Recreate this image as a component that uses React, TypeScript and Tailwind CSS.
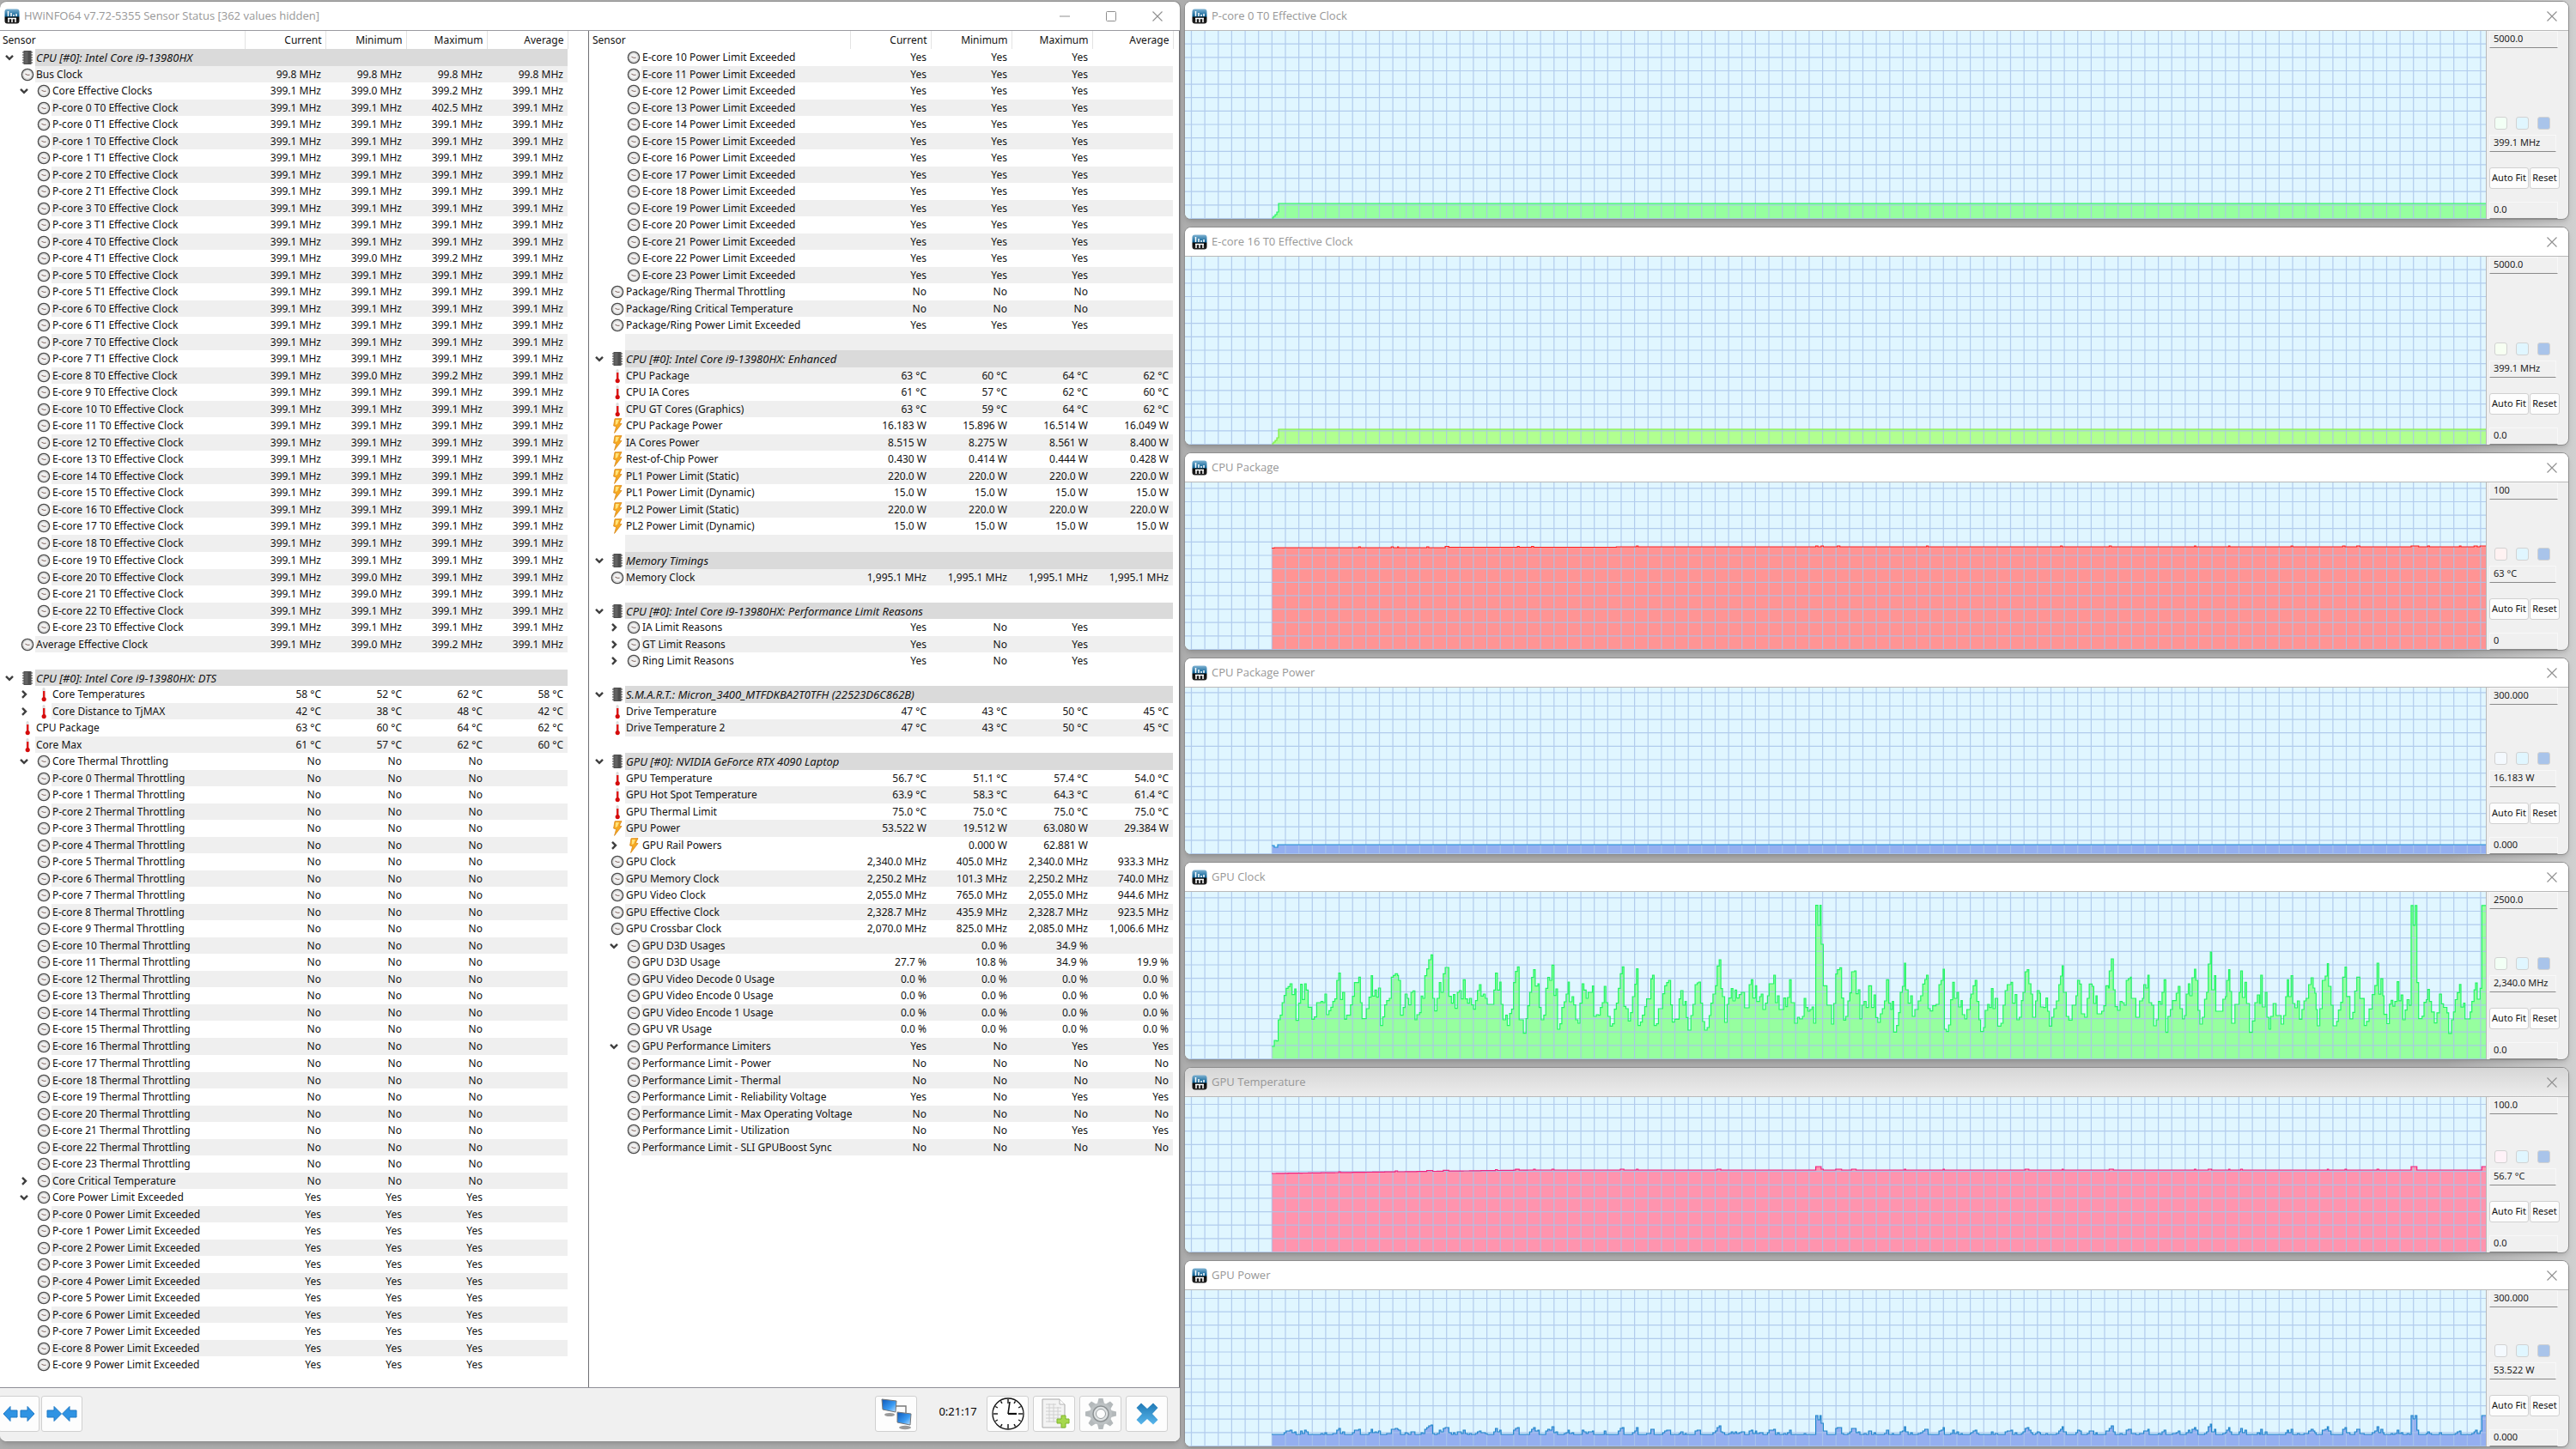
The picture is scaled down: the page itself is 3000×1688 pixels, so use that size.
import type { ReactNode } from "react";
import clsx from "clsx";

type IconKind = "clock" | "temp" | "power" | "chip";

type Row = {
  name: string;
  values: string[];
  kind?: IconKind;
  depth?: number;
  header?: boolean;
  state?: "open" | "closed";
  // a collapsed group with an odd number of children flips the stripes below it
  flip?: boolean;
};

const SPACER: Row = { name: "", values: [] };
const COLUMNS = ["Current", "Minimum", "Maximum", "Average"];

const header = (name: string): Row => ({ name, values: [], kind: "chip", header: true, state: "open" });

const item = (name: string, values: string, kind: IconKind = "clock", depth = 0, extra: Partial<Row> = {}): Row => ({
  name,
  values: values.split("|"),
  kind,
  depth,
  ...extra,
});

const unit = (values: string, suffix: string) =>
  values
    .split("|")
    .map((v) => (v ? `${v} ${suffix}` : ""))
    .join("|");

const mhz = (values: string) => unit(values, "MHz");
const watt = (values: string) => unit(values, "W");
const deg = (values: string) => unit(values, "°C");
const pct = (values: string) => unit(values, "%");

const OPEN: Partial<Row> = { state: "open" };
const CLOSED: Partial<Row> = { state: "closed" };

const CORES = Array.from({ length: 24 }, (_, i) => `${i < 8 ? "P" : "E"}-core ${i}`);
const THREADS = CORES.flatMap((core, i) => (i < 8 ? [`${core} T0`, `${core} T1`] : [`${core} T0`]));

const CLOCK_OVERRIDES: Record<string, string> = {
  "P-core 0 T0": "399.1|399.1|402.5|399.1",
  "P-core 4 T1": "399.1|399.0|399.2|399.1",
  "E-core 8 T0": "399.1|399.0|399.2|399.1",
  "E-core 20 T0": "399.1|399.0|399.1|399.1",
  "E-core 21 T0": "399.1|399.0|399.1|399.1",
};

const LEFT_ROWS: Row[] = [
  header("CPU [#0]: Intel Core i9-13980HX"),
  item("Bus Clock", mhz("99.8|99.8|99.8|99.8")),
  item("Core Effective Clocks", mhz("399.1|399.0|399.2|399.1"), "clock", 1, OPEN),
  ...THREADS.map((t) => item(`${t} Effective Clock`, mhz(CLOCK_OVERRIDES[t] ?? "399.1|399.1|399.1|399.1"), "clock", 1)),
  item("Average Effective Clock", mhz("399.1|399.0|399.2|399.1")),
  SPACER,
  header("CPU [#0]: Intel Core i9-13980HX: DTS"),
  item("Core Temperatures", deg("58|52|62|58"), "temp", 1, CLOSED),
  item("Core Distance to TjMAX", deg("42|38|48|42"), "temp", 1, CLOSED),
  item("CPU Package", deg("63|60|64|62"), "temp"),
  item("Core Max", deg("61|57|62|60"), "temp"),
  item("Core Thermal Throttling", "No|No|No|", "clock", 1, OPEN),
  ...CORES.map((c) => item(`${c} Thermal Throttling`, "No|No|No|", "clock", 1)),
  item("Core Critical Temperature", "No|No|No|", "clock", 1, CLOSED),
  item("Core Power Limit Exceeded", "Yes|Yes|Yes|", "clock", 1, OPEN),
  ...CORES.slice(0, 10).map((c) => item(`${c} Power Limit Exceeded`, "Yes|Yes|Yes|", "clock", 1)),
];

const RIGHT_ROWS: Row[] = [
  ...CORES.slice(10).map((c) => item(`${c} Power Limit Exceeded`, "Yes|Yes|Yes|", "clock", 1)),
  item("Package/Ring Thermal Throttling", "No|No|No|"),
  item("Package/Ring Critical Temperature", "No|No|No|"),
  item("Package/Ring Power Limit Exceeded", "Yes|Yes|Yes|"),
  SPACER,
  header("CPU [#0]: Intel Core i9-13980HX: Enhanced"),
  item("CPU Package", deg("63|60|64|62"), "temp"),
  item("CPU IA Cores", deg("61|57|62|60"), "temp"),
  item("CPU GT Cores (Graphics)", deg("63|59|64|62"), "temp"),
  item("CPU Package Power", watt("16.183|15.896|16.514|16.049"), "power"),
  item("IA Cores Power", watt("8.515|8.275|8.561|8.400"), "power"),
  item("Rest-of-Chip Power", watt("0.430|0.414|0.444|0.428"), "power"),
  item("PL1 Power Limit (Static)", watt("220.0|220.0|220.0|220.0"), "power"),
  item("PL1 Power Limit (Dynamic)", watt("15.0|15.0|15.0|15.0"), "power"),
  item("PL2 Power Limit (Static)", watt("220.0|220.0|220.0|220.0"), "power"),
  item("PL2 Power Limit (Dynamic)", watt("15.0|15.0|15.0|15.0"), "power"),
  SPACER,
  header("Memory Timings"),
  item("Memory Clock", mhz("1,995.1|1,995.1|1,995.1|1,995.1")),
  SPACER,
  header("CPU [#0]: Intel Core i9-13980HX: Performance Limit Reasons"),
  item("IA Limit Reasons", "Yes|No|Yes|", "clock", 1, CLOSED),
  item("GT Limit Reasons", "Yes|No|Yes|", "clock", 1, CLOSED),
  item("Ring Limit Reasons", "Yes|No|Yes|", "clock", 1, { state: "closed", flip: true }),
  SPACER,
  header("S.M.A.R.T.: Micron_3400_MTFDKBA2T0TFH (22523D6C862B)"),
  item("Drive Temperature", deg("47|43|50|45"), "temp"),
  item("Drive Temperature 2", deg("47|43|50|45"), "temp"),
  SPACER,
  header("GPU [#0]: NVIDIA GeForce RTX 4090 Laptop"),
  item("GPU Temperature", deg("56.7|51.1|57.4|54.0"), "temp"),
  item("GPU Hot Spot Temperature", deg("63.9|58.3|64.3|61.4"), "temp"),
  item("GPU Thermal Limit", deg("75.0|75.0|75.0|75.0"), "temp"),
  item("GPU Power", watt("53.522|19.512|63.080|29.384"), "power"),
  item("GPU Rail Powers", watt("|0.000|62.881|"), "power", 1, { state: "closed", flip: true }),
  item("GPU Clock", mhz("2,340.0|405.0|2,340.0|933.3")),
  item("GPU Memory Clock", mhz("2,250.2|101.3|2,250.2|740.0")),
  item("GPU Video Clock", mhz("2,055.0|765.0|2,055.0|944.6")),
  item("GPU Effective Clock", mhz("2,328.7|435.9|2,328.7|923.5")),
  item("GPU Crossbar Clock", mhz("2,070.0|825.0|2,085.0|1,006.6")),
  item("GPU D3D Usages", pct("|0.0|34.9|"), "clock", 1, OPEN),
  item("GPU D3D Usage", pct("27.7|10.8|34.9|19.9"), "clock", 1),
  ...["Video Decode 0", "Video Encode 0", "Video Encode 1", "VR"].map((n) =>
    item(`GPU ${n} Usage`, pct("0.0|0.0|0.0|0.0"), "clock", 1),
  ),
  item("GPU Performance Limiters", "Yes|No|Yes|Yes", "clock", 1, OPEN),
  item("Performance Limit - Power", "No|No|No|No", "clock", 1),
  item("Performance Limit - Thermal", "No|No|No|No", "clock", 1),
  item("Performance Limit - Reliability Voltage", "Yes|No|Yes|Yes", "clock", 1),
  item("Performance Limit - Max Operating Voltage", "No|No|No|No", "clock", 1),
  item("Performance Limit - Utilization", "No|No|Yes|Yes", "clock", 1),
  item("Performance Limit - SLI GPUBoost Sync", "No|No|No|No", "clock", 1),
];

function RowIcon({ kind }: { kind: IconKind }) {
  if (kind === "chip") {
    return (
      <svg viewBox="0 0 14 18" className="h-[18px] w-[14px]">
        <path d="M1 3h12M1 6h12M1 9h12M1 12h12M1 15h12" stroke="#777" strokeWidth="1.4" />
        <rect x="2.5" y="1" width="9" height="16" fill="#4d4d4d" />
        <rect x="3.5" y="2" width="4" height="14" fill="#626262" />
      </svg>
    );
  }
  if (kind === "temp") {
    return (
      <svg viewBox="0 0 14 18" className="h-[18px] w-[14px]">
        <rect x="5.5" y="1" width="3" height="12" rx="1.5" fill="#dcdcdc" />
        <rect x="6" y="5" width="2.4" height="9" fill="#e01818" />
        <circle cx="7.2" cy="14.6" r="2.6" fill="#d40b0b" />
      </svg>
    );
  }
  if (kind === "power") {
    return (
      <svg viewBox="0 0 14 18" className="h-[18px] w-[14px]">
        <path d="M4 .8 12 .6 9.3 6 12 6.6 3.6 17.4 5.6 10 2.6 9z" fill="#f6a821" stroke="#d98a1c" strokeWidth=".8" />
        <path d="M5 2h4L7 7 4.6 8z" fill="#ffe27a" />
      </svg>
    );
  }
  return (
    <svg viewBox="0 0 16 16" className="size-4">
      <circle cx="8" cy="8" r="6.6" fill="#f1f1f1" stroke="#4a4a4a" strokeWidth="1.4" />
      <circle cx="8" cy="8" r="5.2" fill="none" stroke="#c9c9c9" strokeWidth="1" />
      <path d="M5.4 7.2 8.2 8.4 10.6 8.2" fill="none" stroke="#7d5f58" strokeWidth="1" />
    </svg>
  );
}

function Chevron({ state }: { state: "open" | "closed" }) {
  return (
    <svg viewBox="0 0 12 12" className="size-3" fill="none" stroke="#3f3f3f" strokeWidth="2.4">
      <path d={state === "open" ? "M2 3.8 6 7.8 10 3.8" : "M4 1.8 8 5.8 4 9.8"} />
    </svg>
  );
}

function SensorTable({ rows, width, nameCol }: { rows: Row[]; width: string; nameCol: string }) {
  let flips = 0;
  return (
    <table className={clsx("table-fixed border-collapse text-[12px] leading-4 text-[#111]", width)}>
      <colgroup>
        <col className={nameCol} />
        {COLUMNS.map((c) => (
          <col key={c} className="w-[94px]" />
        ))}
      </colgroup>
      <thead>
        <tr className="h-[21px]">
          <th className="border-r border-[#e3e3e3] p-0 pl-[3px] text-left font-normal">Sensor</th>
          {COLUMNS.map((c) => (
            <th key={c} className="border-r border-[#e3e3e3] p-0 pr-1 text-right font-normal">
              {c}
            </th>
          ))}
        </tr>
      </thead>
      <tbody>
        {rows.map((row, i) => {
          const striped = (i + flips) % 2 === 1;
          if (row.flip) flips += 1;
          const fill = row.header ? "bg-[#dadada]" : striped ? "bg-[#efefef]" : "";
          const height = i % 2 === 1 && i % 30 !== 29 ? "h-[19px]" : "h-5";
          return (
            <tr key={i}>
              <td className="p-0">
                <div className={clsx("flex", height)}>
                  <div className={clsx("flex shrink-0 items-center justify-end", row.depth ? "w-[60px]" : "w-[41px]")}>
                    {row.state && (
                      <span className={clsx("flex", row.depth ? "mr-2" : "mr-1.5")}>
                        <Chevron state={row.state} />
                      </span>
                    )}
                    {row.kind && (
                      <span className="flex w-[18px] justify-center">
                        <RowIcon kind={row.kind} />
                      </span>
                    )}
                  </div>
                  <div
                    className={clsx(
                      "flex min-w-0 flex-1 items-center whitespace-nowrap pl-px",
                      fill,
                      row.header && "text-[13px] italic",
                    )}
                  >
                    {row.name}
                  </div>
                </div>
              </td>
              {COLUMNS.map((c, k) => (
                <td key={c} className={clsx("whitespace-nowrap p-0 pr-[5px] text-right", fill)}>
                  {row.values[k] ?? ""}
                </td>
              ))}
            </tr>
          );
        })}
      </tbody>
    </table>
  );
}

function AppIcon() {
  return (
    <svg viewBox="0 0 18 18" className="size-[18px]">
      <defs>
        <linearGradient id="appicon" x1="0" y1="0" x2="0" y2="1">
          <stop offset="0" stopColor="#7fb3d3" />
          <stop offset=".5" stopColor="#0b5f93" />
          <stop offset=".56" stopColor="#0b0b0b" />
          <stop offset="1" stopColor="#222" />
        </linearGradient>
      </defs>
      <rect x=".5" y=".5" width="17" height="17" rx="3" fill="url(#appicon)" />
      <path
        d="M4.500 3v6M8 5v4M11 7v2M14 6v3M5 11v5M9 11v5M13 11v5M4 11.500h10"
        stroke="#fff"
        strokeWidth="1.500"
      />
    </svg>
  );
}

function CloseGlyph() {
  return (
    <svg viewBox="0 0 12 12" className="size-3" stroke="#8f8f8f" strokeWidth="1.1">
      <path d="M.5.5l11 11M11.5.5l-11 11" />
    </svg>
  );
}

function ToolButton({ label, wide, children }: { label: string; wide?: boolean; children: ReactNode }) {
  return (
    <button
      type="button"
      aria-label={label}
      className={clsx(
        "flex h-[42px] items-center justify-center rounded-[3px] border border-[#d0d0d0] bg-[#fdfdfd]",
        wide ? "w-[49px]" : "w-12",
      )}
    >
      {children}
    </button>
  );
}

function Toolbar() {
  return (
    <div className="flex h-[63px] items-center border-t border-[#8f8f98] bg-[#f0f0f0] pb-0.5 pr-[14px]">
      <div className="-ml-0.5 flex gap-0.5">
        <ToolButton label="Expand">
          <svg viewBox="0 0 38 20" className="h-5 w-[38px]" fill="#2f93e3" stroke="#1f78c4">
            <path d="M1 10 9 1.5V6h8v8H9v4.5zM37 10 29 1.5V6h-8v8h8v4.5z" />
          </svg>
        </ToolButton>
        <ToolButton label="Shrink">
          <svg viewBox="0 0 38 20" className="h-5 w-[38px]" fill="#2f93e3" stroke="#1f78c4">
            <path d="M18.5 10 10 1.5V6H2v8h8v4.5zM19.5 10 28 1.5V6h8v8h-8v4.5z" />
          </svg>
        </ToolButton>
      </div>
      <div className="ml-auto flex items-center gap-[5px]">
        <ToolButton label="Network" wide>
          <svg viewBox="0 0 38 38" className="size-[38px]">
            <defs>
              <linearGradient id="screen" x1="0" y1="0" x2="1" y2="1">
                <stop offset="0" stopColor="#0b56b8" />
                <stop offset=".6" stopColor="#3c9cf3" />
                <stop offset="1" stopColor="#bfe2ff" />
              </linearGradient>
            </defs>
            <path d="M18 10h12v8" fill="none" stroke="#777" strokeWidth="1.4" />
            <ellipse cx="11" cy="20" rx="6" ry="2" fill="#9a9a9a" />
            <path d="M2 2l17 2-1 13-15-3z" fill="url(#screen)" stroke="#777" />
            <ellipse cx="29" cy="35" rx="7" ry="2.2" fill="#9a9a9a" />
            <path d="M20 17l16 2-1 13-15-3z" fill="url(#screen)" stroke="#777" />
          </svg>
        </ToolButton>
        <span className="w-[71px] pb-1 pl-3.5 text-center text-[13px] text-black">0:21:17</span>
        <ToolButton label="Reset clock" wide>
          <svg viewBox="0 0 40 40" className="size-10" stroke="#111" fill="none">
            <circle cx="20" cy="20" r="18" fill="#fff" strokeWidth="1.3" />
            {Array.from({ length: 12 }, (_, i) => (
              <path key={i} d={i % 3 ? "M20 3v3" : "M20 3v5"} strokeWidth="1.4" transform={`rotate(${i * 30} 20 20)`} />
            ))}
            <path d="M20 20h10" strokeWidth="2.2" />
            <path d="M20 20l2-14" strokeWidth="1.6" />
          </svg>
        </ToolButton>
        <ToolButton label="Log to file" wide>
          <svg viewBox="0 0 38 38" className="size-[38px]">
            <path d="M5 2h20l6 6v27H5z" fill="#f3f3f3" stroke="#a9a9a9" />
            <path d="M25 2v6h6" fill="#fff" stroke="#b5b5b5" />
            <path d="M9 8h12M9 12h18M9 16h18M9 20h18M9 24h18M9 28h14M13 7v22M18 7v22M23 11v16" stroke="#d0d0d0" />
            <path d="M27 21h5v4h4v5h-4v5h-5v-5h-5v-5h5z" fill="#a6d84e" stroke="#7db52a" />
          </svg>
        </ToolButton>
        <ToolButton label="Settings" wide>
          <svg viewBox="0 0 38 38" className="size-[38px]">
            <g fill="#b4b9bb">
              {Array.from({ length: 8 }, (_, i) => (
                <path key={i} d="M16.5 1h5l2 8h-9z" transform={`rotate(${i * 45} 19 19)`} />
              ))}
            </g>
            <circle cx="19" cy="19" r="13" fill="#bcc1c3" />
            <circle cx="19" cy="19" r="9" fill="#dfe2e3" stroke="#8d9294" strokeWidth="1.5" />
            <circle cx="19" cy="19" r="5.5" fill="#fdfdfd" stroke="#999fa1" strokeWidth="1" />
          </svg>
        </ToolButton>
        <ToolButton label="Close sensors" wide>
          <svg viewBox="0 0 28 28" className="size-7">
            <defs>
              <linearGradient id="cross" x1="0" y1="0" x2="0" y2="1">
                <stop offset="0" stopColor="#2079b5" />
                <stop offset="1" stopColor="#58b6ec" />
              </linearGradient>
            </defs>
            <path d="M7 1.5 14 8l7-6.5L26.5 7 20 14l6.5 7-5.5 5.5L14 20l-7 6.5L1.5 21 8 14 1.5 7z" fill="url(#cross)" />
          </svg>
        </ToolButton>
      </div>
    </div>
  );
}

const CHART_W = 1515;
const CELL = 15.64;

type Point = [number, number];

// "x,y x,y" pairs in trace units -> chart x and height above the base line
const trace = (x0: number, sx: number, base: number, sy: number, pairs: string): Point[] =>
  pairs.split(" ").map((p) => {
    const [x, y] = p.split(",").map(Number);
    return [x0 + x / sx, (base - y) / sy];
  });

const GPU_CLOCK: Point[] = [
  ...trace(
    -10, 2.613, 754, 3,
    "290,709 298,688 304,690 310,616 316,600 322,556 328,531 334,506 340,500 346,490 352,528 360,508 364,618 372,558 378,492 383,545 390,490 395,512 401,572 412,614 420,606 427,556 440,552 446,556 452,526 457,598 464,584 470,572 476,552 482,543 488,478 494,453 499,545 506,520 512,614 518,600 530,564 536,534 542,486 555,467 560,556 565,612 578,577 586,537 593,462 597,533 604,512 609,537 615,505 621,636 628,606 634,564 640,549 648,541 654,467 660,461 666,455 673,461 676,478 682,600 690,573 696,526 702,541 707,564 714,520 720,515 726,616 732,598 740,591 745,533 750,541 756,462 762,438 768,406 775,389 780,541 786,585 793,541 800,486 805,520 812,455 818,433 829,534 837,558 843,528 848,576 855,520 861,514 867,543 873,476 879,543 886,558 892,541 898,564 904,579 910,549 916,514 922,493 927,533 934,526 940,541 946,562 966,512 971,453 977,512 984,484 988,562 994,616 1002,600 1007,636 1014,594 1020,579 1026,486 1032,447 1038,431 1043,616 1056,663 1064,612 1069,567 1075,520 1081,468 1087,441 1092,498 1100,490 1104,573 1110,616 1118,600 1124,506 1130,468 1136,478 1143,425 1149,531 1155,508 1160,649 1167,630 1173,573 1180,553 1186,526 1192,484 1196,553 1204,535 1209,564 1215,616 1222,628 1228,558 1235,490 1240,512 1247,541 1253,520 1266,498 1270,604 1278,598 1284,600 1290,573 1296,556 1302,499 1307,556 1313,604 1320,638 1327,630 1333,579 1339,558 1345,506 1351,455 1357,431 1362,569 1368,577 1375,620 1382,591 1388,535 1395,492 1400,438 1405,636 1412,624 1418,600 1425,570 1431,543 1444,473 1449,460 1454,636 1461,630 1467,577 1480,525 1486,497 1492,486 1498,478 1504,564 1509,624 1516,614 1530,543 1535,514",
  ),
  ...trace(
    580, 2.063, 604, 3,
    "0,415 5,402 8,458 12,502 19,451 24,412 29,343 34,337 38,334 42,408 47,472 52,502 58,493 63,451 67,408 72,376 78,347 82,278 87,256 91,357 95,385 100,475 106,412 110,390 116,357 120,400 125,362 129,390 135,378 140,370 148,424 159,343 164,326 168,390 174,347 177,402 184,385 188,376 192,430 198,408 203,382 207,340 218,310 222,406 227,382 231,430 242,390 247,420 251,388 256,326 260,406 268,478 275,457 280,463 287,454 291,391 295,423 300,436 305,430 310,421 314,478 319,66 324,136 329,66 332,202 337,347 346,415 357,481 362,409 367,306 371,291 377,284 381,390 386,467 391,454 396,400 401,372 405,298 412,295 416,375 421,361 425,463 430,415 435,402 440,423 446,347 453,423 459,379 463,458 468,475 474,445 479,427 484,400 489,326 494,408 499,430 503,402 506,509 513,486 518,441 522,370 527,349 532,268 535,361 541,408 547,382 551,454 557,430 565,400 571,382 576,341 581,325 585,310 589,427 594,435 600,417 608,412 615,343 620,328 625,289 628,499 633,507 638,484 643,396 648,335 652,391 658,370 662,421 668,399 671,448 677,463 682,430 690,391 692,376 697,347 702,328 706,402 711,466 715,507 722,493 726,433 732,412 736,423 741,357 745,427 750,391 756,488 764,478 769,415 774,364 779,343 788,335 792,408 798,378 802,466 808,457 813,399 817,370 822,298 827,291 831,340 836,376 840,457 847,400 851,364 856,373 859,421 866,423 872,390 876,436 880,488 886,457 891,427 897,400 903,343 907,313 911,277 914,370 921,454 927,467 935,415 944,382 948,328 953,341 957,445 965,457 971,391 976,341 983,349 987,409 992,382 995,445 1006,436 1011,417 1016,347 1022,355 1024,295 1029,253 1034,361 1038,420 1044,433 1050,402 1055,406 1060,415 1065,328 1070,322 1075,317 1077,391 1088,457 1097,400 1104,391 1107,343 1112,355 1117,310 1120,406 1126,415 1131,487 1137,466 1142,402 1147,412 1151,370 1156,326 1160,510 1165,454 1171,430 1176,399 1185,373 1190,349 1194,427 1200,463 1205,451 1209,376 1214,340 1218,382 1223,319 1229,289 1232,328 1237,433 1242,481 1248,457 1253,394 1258,370 1262,271 1267,229 1270,361 1277,312 1280,436 1297,394 1303,385 1306,328 1311,291 1314,367 1318,478 1326,412 1336,370 1340,295 1344,388 1350,335 1354,409 1361,510 1368,470 1374,406 1380,379 1385,409 1388,310 1392,421 1399,370 1403,457 1408,499 1412,454 1418,409 1425,451 1437,481 1443,451 1448,385 1452,326 1455,385 1461,312 1465,409 1470,424 1476,400 1481,464 1487,430 1492,400 1497,391 1503,343 1509,319 1514,355 1518,373 1521,430 1524,487 1530,427 1536,328 1543,313 1548,270 1551,349 1557,415 1562,487",
  ),
  ...trace(
    1320, 3, 557, 2.215,
    "64,459 70,430 78,410 85,345 93,319 98,395 110,453 120,436 127,381 134,345 145,400 160,470 168,459 177,427 188,390 197,367 205,309 211,389 218,349 225,393 229,441 239,465 248,415 254,405 260,420 267,408 275,357 281,406 289,391 295,455 303,430 310,403 317,418 324,160 331,211 338,160 344,359 350,452 362,446 369,410 377,403 382,377 388,408 395,435 405,463 414,437 423,389 430,414 437,423 449,437 455,490 465,455 472,435 478,403 485,385 493,364 498,422 507,412 512,453 530,435 536,408 544,378 549,360 555,402 565,374 571,160",
  ),
];

const START = 101;

const GPU_POWER: Point[] = GPU_CLOCK.map(([x, h]) => [x, Math.round(14 + Math.max(0, h - 64) * 0.19)]);

const GPU_TEMP: Point[] = GPU_CLOCK.map(([x, h]) => {
  const rise = 92 + Math.min(1, (x - START) / 300) * 4;
  return [x, rise + (h > 150 ? 4 : h > 98 ? 1 : 0)];
});

const CPU_TEMP: Point[] = GPU_CLOCK.map(([x, h], i) => {
  const rise = 119 + Math.min(2, Math.floor((x - START) / 200)) / 2;
  return [x, rise + (h > 95 && i % 3 === 0 ? 1 : 0) + (x > 1430 && h > 80 ? 1 : 0)];
});

const FLAT_CLOCK: Point[] = [
  [START, 1],
  [103, 3],
  [105, 5],
  [107, 8],
  [109, 18],
];

const CPU_POWER: Point[] = [
  [START, 10],
  [104, 8],
  [108, 11],
];

type Graph = {
  title: string;
  size: string;
  height: number;
  max: string;
  current: string;
  min: string;
  points: Point[];
  stroke: string;
  fill: string;
  swatch: string;
  shaded?: boolean;
};

const GRAPHS: Graph[] = [
  {
    title: "P-core 0 T0 Effective Clock", size: "h-[255px]", height: 219, max: "5000.0", current: "399.1 MHz", min: "0.0",
    points: FLAT_CLOCK, stroke: "#22f565", fill: "#96ff9f", swatch: "bg-[#f2fff5]",
  },
  {
    title: "E-core 16 T0 Effective Clock", size: "h-[255px]", height: 219, max: "5000.0", current: "399.1 MHz", min: "0.0",
    points: FLAT_CLOCK, stroke: "#7df03c", fill: "#b1ff90", swatch: "bg-[#f7fff2]",
  },
  {
    title: "CPU Package", size: "h-[231px]", height: 195, max: "100", current: "63 °C", min: "0",
    points: CPU_TEMP, stroke: "#ff2020", fill: "#ff9494", swatch: "bg-[#fff2f2]",
  },
  {
    title: "CPU Package Power", size: "h-[230px]", height: 194, max: "300.000", current: "16.183 W", min: "0.000",
    points: CPU_POWER, stroke: "#1c90d6", fill: "#94aff0", swatch: "bg-[#f4f9fe]",
  },
  {
    title: "GPU Clock", size: "h-[231px]", height: 195, max: "2500.0", current: "2,340.0 MHz", min: "0.0",
    points: GPU_CLOCK, stroke: "#22f565", fill: "#96ff9f", swatch: "bg-[#f2fff5]",
  },
  {
    title: "GPU Temperature", size: "h-[217px]", height: 181, max: "100.0", current: "56.7 °C", min: "0.0",
    points: GPU_TEMP, stroke: "#f0207f", fill: "#ff94ae", swatch: "bg-[#fff2f8]", shaded: true,
  },
  {
    title: "GPU Power", size: "h-[218px]", height: 182, max: "300.000", current: "53.522 W", min: "0.000",
    points: GPU_POWER, stroke: "#1f86cc", fill: "#94aff0", swatch: "bg-[#f4f9fe]",
  },
];

function Chart({ graph }: { graph: Graph }) {
  const h = graph.height;
  const steps = graph.points.map(([x, v], i) => {
    const y = (h - v).toFixed(1);
    return i === 0 ? `M${x.toFixed(1)} ${y}` : `H${x.toFixed(1)}V${y}`;
  });
  const line = `${steps.join("")}H${CHART_W}`;
  const first = graph.points[0][0];
  const columns = Array.from({ length: 97 }, (_, i) => `M${(7.5 + i * CELL).toFixed(1)} 0V${h}`).join("");
  const lines = Array.from({ length: 14 }, (_, i) => h - 0.5 - i * CELL)
    .filter((y) => y > 0)
    .map((y) => `M0 ${y.toFixed(1)}H${CHART_W}`)
    .join("");
  return (
    <svg viewBox={`0 0 ${CHART_W} ${h}`} preserveAspectRatio="none" className="h-full min-w-0 flex-1 bg-[#e0f6ff]">
      <path d={`${line}V${h}H${first}Z`} fill={graph.fill} />
      <path d={columns + lines} fill="none" stroke="#a9c4ea" strokeWidth="1.2" opacity=".85" />
      <path d={line} fill="none" stroke={graph.stroke} strokeWidth="1.2" />
    </svg>
  );
}

function GraphField({ label, value, readOnly }: { label: string; value: string; readOnly?: boolean }) {
  return (
    <input
      aria-label={label}
      defaultValue={value}
      readOnly={readOnly}
      className={clsx(
        "h-5 shrink-0 border border-[#f8f8f8] border-b-[#8a8a8a] bg-[#f0f0f0] pb-1 pl-1 text-[11px] text-[#222]",
        readOnly ? "w-[78px]" : "w-20",
      )}
    />
  );
}

function GraphWindow({ graph }: { graph: Graph }) {
  return (
    <section
      className={clsx("flex flex-col overflow-hidden rounded-lg border border-[#8e8e8e] bg-[#f0f0f0] shadow-md", graph.size)}
    >
      <header
        className={clsx(
          "flex h-[34px] shrink-0 items-center gap-[5px] border-b border-[#b9b9b9] pl-2 pr-[13px]",
          graph.shaded ? "bg-linear-to-b from-[#d6d6d6] to-[#ececec]" : "bg-white",
        )}
      >
        <AppIcon />
        <h2 className="font-['Open_Sans','Noto_Sans',sans-serif] text-[13px] text-[#979797]">{graph.title}</h2>
        <button type="button" aria-label="Close" className="ml-auto">
          <CloseGlyph />
        </button>
      </header>
      <div className="flex min-h-0 flex-1">
        <Chart graph={graph} />
        <div className="flex w-24 shrink-0 flex-col border-l border-[#b9b9b9] pl-[3px]">
          <GraphField label="Maximum" value={graph.max} />
          <div className="mt-auto flex gap-2.5 pl-1.5">
            <button type="button" aria-label="Line color" className={clsx("size-[15px] rounded-[3px] border border-[#d2d2d2]", graph.swatch)} />
            <button type="button" aria-label="Background color" className="size-[15px] rounded-[3px] border border-[#d2d2d2] bg-[#e0f6ff]" />
            <button type="button" aria-label="Grid color" className="size-[15px] rounded-[3px] border border-[#d2d2d2] bg-[#a9c4ea]" />
          </div>
          <div className="mt-1.5 flex">
            <GraphField label="Current" value={graph.current} readOnly />
          </div>
          <div className="mt-[18px] mb-[15px] flex gap-px text-[11px] text-[#111]">
            <button type="button" className="h-[25px] w-[46px] whitespace-nowrap rounded-[3px] border border-[#d0d0d0] bg-[#fdfdfd]">
              Auto Fit
            </button>
            <button type="button" className="h-[25px] w-[35px] rounded-[3px] border border-[#d0d0d0] bg-[#fdfdfd]">
              Reset
            </button>
          </div>
          <GraphField label="Minimum" value={graph.min} />
        </div>
      </div>
    </section>
  );
}

function SensorWindow() {
  return (
    <section className="mb-2 flex flex-col overflow-hidden rounded-lg border border-l-0 border-[#8e8e8e] bg-white shadow-md">
      <header className="flex h-[34px] shrink-0 items-center gap-[5px] border-b border-[#9a9aa0] pl-[5px] pr-5">
        <AppIcon />
        <h1 className="font-['Open_Sans','Noto_Sans',sans-serif] text-[13px] text-[#979797]">
          HWiNFO64 v7.72-5355 Sensor Status [362 values hidden]
        </h1>
        <div className="ml-auto flex items-center gap-[42px]">
          <button type="button" aria-label="Minimize">
            <svg viewBox="0 0 12 12" className="size-3" stroke="#8f8f8f">
              <path d="M0 6h12" />
            </svg>
          </button>
          <button type="button" aria-label="Maximize">
            <svg viewBox="0 0 12 12" className="size-3" fill="none" stroke="#8f8f8f">
              <rect x=".5" y=".5" width="11" height="11" rx="1" />
            </svg>
          </button>
          <button type="button" aria-label="Close">
            <CloseGlyph />
          </button>
        </div>
      </header>
      <div className="grid flex-1 grid-cols-[685fr_689fr]">
        <div>
          <SensorTable rows={LEFT_ROWS} width="w-[661px]" nameCol="w-[285px]" />
        </div>
        <div className="border-x border-[#6f6f74] pl-px">
          <SensorTable rows={RIGHT_ROWS} width="w-[679px]" nameCol="w-[303px]" />
        </div>
      </div>
      <Toolbar />
    </section>
  );
}

export default function App() {
  return (
    <main className="grid min-h-screen grid-cols-[1375fr_1613fr] gap-1 bg-linear-to-r from-[#adadad] from-95% to-[#d0d0d0] pr-2 pt-px font-['Noto_Sans',sans-serif]">
      <SensorWindow />
      <div className="flex flex-col gap-2">
        {GRAPHS.map((graph) => (
          <GraphWindow key={graph.title} graph={graph} />
        ))}
      </div>
    </main>
  );
}
